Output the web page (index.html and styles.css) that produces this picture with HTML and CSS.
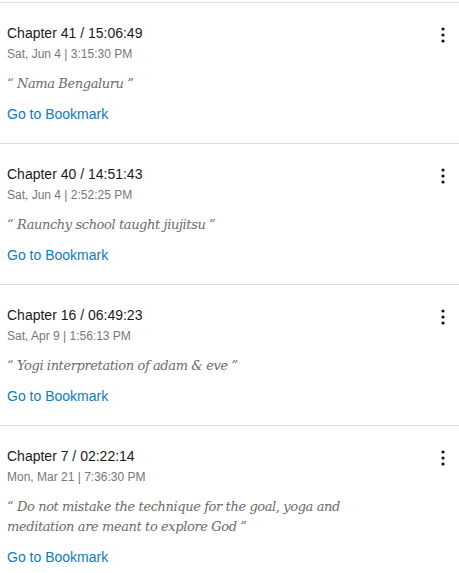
FILE: index.html
```html
<!DOCTYPE html>
<html>
<head>
<meta charset="UTF-8">
<title>Bookmarks</title>
<link rel="stylesheet" href="styles.css">
</head>
<body>
	<div class="liste_signets">
		<div class="signet">
			<p class="titre">Chapter 41 / 15:06:49</p>
			<p class="date">Sat, Jun 4 | 3:15:30 PM</p>
			<p class="citation">&ldquo; Nama Bengaluru &rdquo;</p>
			<a class="lien" href="#">Go to Bookmark</a>
			<button class="menu" title="Options"><svg width="4" height="16" viewBox="0 0 4 16"><circle cx="2" cy="2" r="1.6"/><circle cx="2" cy="8" r="1.6"/><circle cx="2" cy="14" r="1.6"/></svg></button>
		</div>
		<div class="signet">
			<p class="titre">Chapter 40 / 14:51:43</p>
			<p class="date">Sat, Jun 4 | 2:52:25 PM</p>
			<p class="citation">&ldquo; Raunchy school taught jiujitsu &rdquo;</p>
			<a class="lien" href="#">Go to Bookmark</a>
			<button class="menu" title="Options"><svg width="4" height="16" viewBox="0 0 4 16"><circle cx="2" cy="2" r="1.6"/><circle cx="2" cy="8" r="1.6"/><circle cx="2" cy="14" r="1.6"/></svg></button>
		</div>
		<div class="signet">
			<p class="titre">Chapter 16 / 06:49:23</p>
			<p class="date">Sat, Apr 9 | 1:56:13 PM</p>
			<p class="citation">&ldquo; Yogi interpretation of adam &amp; eve &rdquo;</p>
			<a class="lien" href="#">Go to Bookmark</a>
			<button class="menu" title="Options"><svg width="4" height="16" viewBox="0 0 4 16"><circle cx="2" cy="2" r="1.6"/><circle cx="2" cy="8" r="1.6"/><circle cx="2" cy="14" r="1.6"/></svg></button>
		</div>
		<div class="signet">
			<p class="titre">Chapter 7 / 02:22:14</p>
			<p class="date">Mon, Mar 21 | 7:36:30 PM</p>
			<p class="citation">&ldquo; Do not mistake the technique for the goal, yoga and meditation are meant to explore God &rdquo;</p>
			<a class="lien" href="#">Go to Bookmark</a>
			<button class="menu" title="Options"><svg width="4" height="16" viewBox="0 0 4 16"><circle cx="2" cy="2" r="1.6"/><circle cx="2" cy="8" r="1.6"/><circle cx="2" cy="14" r="1.6"/></svg></button>
		</div>
	</div>
</body>
</html>
```
FILE: styles.css
```css
body
{
	margin : 0;
	padding-top : 2px;
	font : 14px "Liberation Sans", Arial, sans-serif;
	background : #fff;
	color : #222;
}

.signet
{
	position : relative;
	border-top : 1px solid #ddd;
	padding : 21px 7px 20px 7px;
}

.signet p
{
	margin : 0;
}

.titre
{
	font-size : 14px;
	line-height : 18px;
	color : #1a1a1a;
}

.signet .date
{
	margin-top : 4px;
	font-size : 12px;
	line-height : 16px;
	color : #777;
}

.signet .citation
{
	margin-top : 12px;
	max-width : 345px;
	font : italic 13px/20px "DejaVu Serif", Georgia, serif;
	letter-spacing : -0.4px;
	color : #6f6a66;
}

.lien
{
	display : block;
	margin-top : 11px;
	font-size : 14px;
	line-height : 18px;
	color : #0f7bc0;
	text-decoration : none;
}

.menu
{
	position : absolute;
	top : 24px;
	right : 14px;
	padding : 0;
	border : none;
	background : none;
	line-height : 0;
	cursor : pointer;
}

.menu svg
{
	fill : #111;
}
```
